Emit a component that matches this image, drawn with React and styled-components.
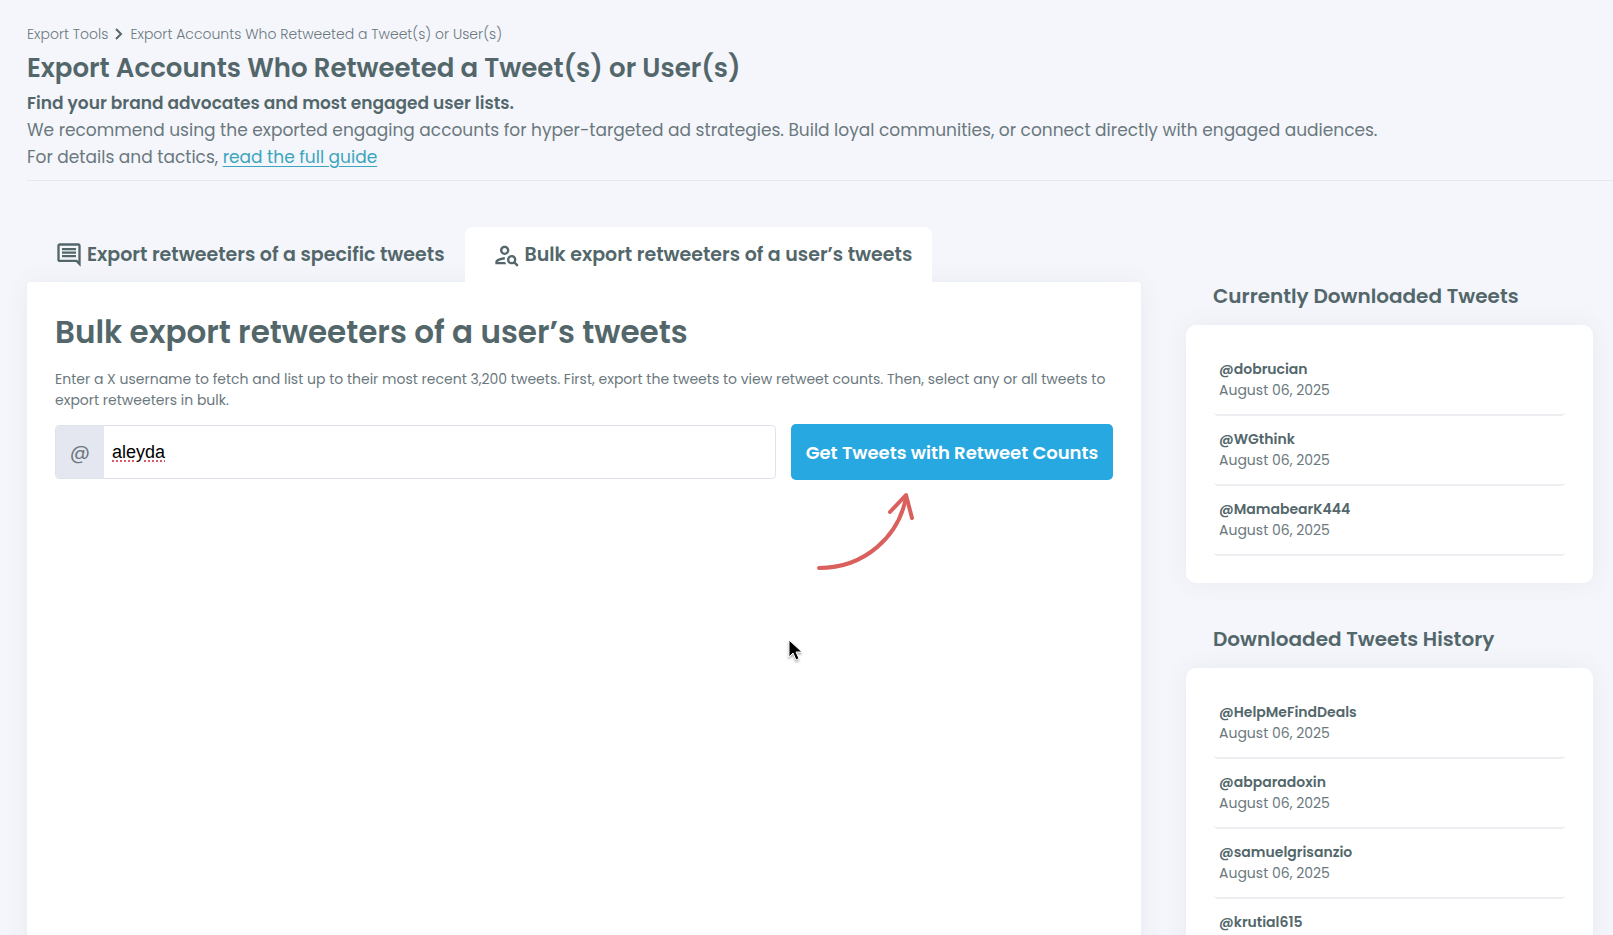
import React from "react";
import styled, { createGlobalStyle, css } from "styled-components";
import { MdOutlineComment, MdOutlinePersonSearch } from "react-icons/md";

const ink = "#53676b";
const soft = "#6b787e";

const GlobalStyle = createGlobalStyle`
  *, *::before, *::after { box-sizing: border-box; }
  body {
    margin: 0;
    background: #f4f6fb;
    color: ${soft};
    font-family: Poppins, Inter, "Open Sans", sans-serif;
    font-size: 17px;
    line-height: 27px;
  }
  h1, h2, h3, p, ul, ol { margin: 0; padding: 0; }
  ul, ol { list-style: none; }
`;

const Page = styled.div`
  min-height: 100vh;
  padding: 24px 0 0 27px;
`;

const Header = styled.header`
  padding-bottom: 9px;
  border-bottom: 1px solid #e4e8ee;
`;

const Breadcrumb = styled.ol`
  display: flex;
  align-items: center;
  gap: 7px;
  font-size: 14px;
  line-height: 20px;
`;

const Crumb = styled.li`
  display: flex;
  align-items: center;
  gap: 7px;
  font-weight: 300;

  a { color: inherit; text-decoration: none; }
`;

const PageTitle = styled.h1`
  padding: 4px 0 2px;
  color: ${ink};
  font-size: 26px;
  font-weight: 600;
  line-height: 40px;
`;

const Lead = styled.p`
  color: ${ink};
  font-weight: 600;
`;

const GuideLink = styled.a`
  color: #3ba5bd;
  text-decoration: underline;
  text-underline-offset: 3px;
`;

const Content = styled.main`
  display: grid;
  grid-template-columns: minmax(0, 1fr) 407px;
  column-gap: 45px;
  padding: 46px 20px 0 0;
`;

const Workspace = styled.section`
  display: flex;
  flex-direction: column;
`;

const Tabs = styled.div`
  position: relative;
  z-index: 1;
  display: flex;
`;

const Tab = styled.button`
  display: flex;
  align-items: center;
  gap: 4px;
  height: 55px;
  padding: 0 20px 0 28px;
  border: 0;
  border-radius: 8px 8px 0 0;
  background: transparent;
  color: ${ink};
  font: inherit;
  font-size: 19px;
  font-weight: 600;
  white-space: nowrap;

  ${(p) => p.$active && css`background: #fff;`}

  svg { width: 28px; height: 28px; flex: none; }
`;

const surface = css`
  background: #fff;
  box-shadow: 0 0 24px rgba(80, 90, 130, 0.07);
`;

const Panel = styled.div`
  ${surface}
  flex: 1;
  padding: 27px 28px;
  border-radius: 4px 4px 0 0;
`;

const PanelTitle = styled.h2`
  color: ${ink};
  font-size: 31px;
  font-weight: 600;
  line-height: 46px;
`;

const Description = styled.p`
  padding: 14px 0 13px;
  font-size: 14px;
  line-height: 21px;
`;

const Form = styled.form`
  display: flex;
  align-items: center;
  gap: 15px;
`;

const Field = styled.div`
  display: flex;
  flex: 1;
  height: 54px;
  overflow: hidden;
  border: 1px solid #e0e3ec;
  border-radius: 4px;
`;

const Prefix = styled.label`
  display: flex;
  align-items: center;
  justify-content: center;
  width: 48px;
  background: #e4e6f0;
  font-size: 20px;
`;

const Username = styled.input`
  flex: 1;
  min-width: 0;
  padding: 0 8px;
  border: 0;
  outline: 0;
  background: transparent;
  color: #000;
  font-family: "Liberation Sans", Arial, sans-serif;
  font-size: 18px;
  text-decoration: underline dotted #e0566a 2px;
  text-underline-offset: 3px;
`;

const Action = styled.div`
  position: relative;
  flex: 0 0 322px;
`;

const SubmitButton = styled.button`
  width: 100%;
  height: 56px;
  padding: 0;
  border: 0;
  border-radius: 5px;
  background: #28a8e0;
  color: #fff;
  font: inherit;
  font-size: 18px;
  font-weight: 600;
  white-space: nowrap;
`;

const Arrow = styled.svg`
  position: absolute;
  top: 66px;
  left: 24px;
`;

const Pointer = styled.svg`
  position: absolute;
  top: 214px;
  left: -4px;
  filter: drop-shadow(0 2px 1px rgba(0, 0, 0, 0.3));
`;

const Sidebar = styled.aside`
  display: flex;
  flex-direction: column;
  gap: 42px;
  padding-top: 55px;
`;

const SidebarTitle = styled.h3`
  padding: 0 27px 14px;
  color: ${ink};
  font-size: 20px;
  font-weight: 600;
  line-height: 29px;
`;

const Card = styled.ul`
  ${surface}
  padding: 21px 28px 27px;
  border-radius: 10px;
`;

const Entry = styled.li`
  padding: 13px 5px;
  border-bottom: 2px solid #eceef1;
  border-radius: 4px;
  font-size: 14px;
  line-height: 21px;

  strong { display: block; color: ${ink}; font-weight: 600; }
  time { display: block; }
`;

const current = ["@dobrucian", "@WGthink", "@MamabearK444"];
const history = ["@HelpMeFindDeals", "@abparadoxin", "@samuelgrisanzio", "@krutial615"];

function Chevron() {
  return (
    <svg width="8" height="12" viewBox="0 0 8 12" fill="none" stroke={ink} strokeWidth="2" aria-hidden="true">
      <path d="M1 1 6 6l-5 5" />
    </svg>
  );
}

function TweetList({ title, names }) {
  return (
    <section>
      <SidebarTitle>{title}</SidebarTitle>
      <Card>
        {names.map((name) => (
          <Entry key={name}>
            <strong>{name}</strong>
            <time dateTime="2025-08-06">August 06, 2025</time>
          </Entry>
        ))}
      </Card>
    </section>
  );
}

export default function App() {
  return (
    <>
      <GlobalStyle />
      <Page>
        <Header>
          <Breadcrumb>
            <Crumb><a href="#tools">Export Tools</a><Chevron /></Crumb>
            <Crumb>Export Accounts Who Retweeted a Tweet(s) or User(s)</Crumb>
          </Breadcrumb>
          <PageTitle>Export Accounts Who Retweeted a Tweet(s) or User(s)</PageTitle>
          <Lead>Find your brand advocates and most engaged user lists.</Lead>
          <p>We recommend using the exported engaging accounts for hyper-targeted ad strategies. Build loyal communities, or connect directly with engaged audiences.</p>
          <p>For details and tactics, <GuideLink href="#guide">read the full guide</GuideLink></p>
        </Header>
        <Content>
          <Workspace>
            <Tabs role="tablist">
              <Tab type="button" role="tab" aria-selected="false">
                <MdOutlineComment />
                Export retweeters of a specific tweets
              </Tab>
              <Tab type="button" role="tab" aria-selected="true" $active>
                <MdOutlinePersonSearch />
                Bulk export retweeters of a user’s tweets
              </Tab>
            </Tabs>
            <Panel role="tabpanel">
              <PanelTitle>Bulk export retweeters of a user’s tweets</PanelTitle>
              <Description>
                Enter a X username to fetch and list up to their most recent 3,200 tweets. First, export the tweets to view retweet counts. Then, select any or all tweets to export retweeters in bulk.
              </Description>
              <Form onSubmit={(e) => e.preventDefault()}>
                <Field>
                  <Prefix htmlFor="username">@</Prefix>
                  <Username id="username" type="text" defaultValue="aleyda" aria-label="Username" />
                </Field>
                <Action>
                  <SubmitButton type="submit">Get Tweets with Retweet Counts</SubmitButton>
                  <Arrow width="104" height="84" viewBox="0 0 104 84" fill="none" stroke="#d9605c" strokeWidth="4" strokeLinecap="round" strokeLinejoin="round" aria-hidden="true">
                    <path d="M4 78C50 78 84 46 91 7" />
                    <path d="M75 22 91 5 97 28" />
                  </Arrow>
                  <Pointer width="16" height="24" viewBox="0 0 16 24" aria-hidden="true">
                    <path d="M2 2v17l4-4 3 7 3-1.500-3-6.500h6z" fill="#000" stroke="#fff" strokeWidth="1" />
                  </Pointer>
                </Action>
              </Form>
            </Panel>
          </Workspace>
          <Sidebar>
            <TweetList title="Currently Downloaded Tweets" names={current} />
            <TweetList title="Downloaded Tweets History" names={history} />
          </Sidebar>
        </Content>
      </Page>
    </>
  );
}
